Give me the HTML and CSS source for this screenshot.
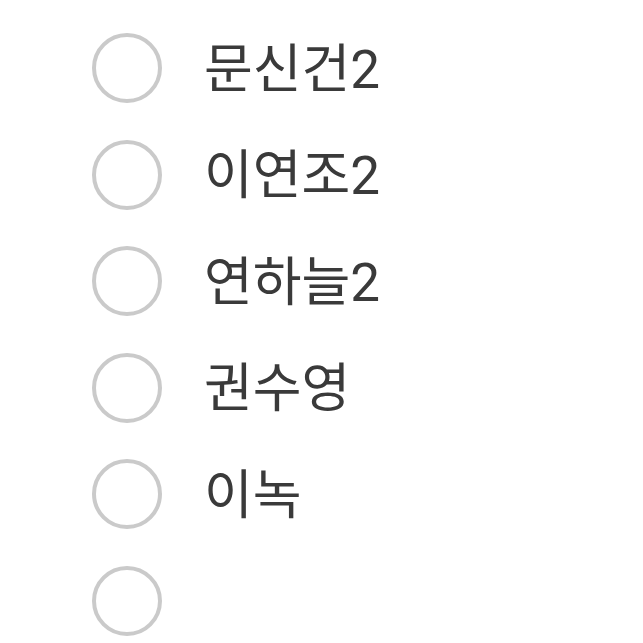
FILE: index.html
```html
<!DOCTYPE html>
<html>
    <head>
        <meta charset="UTF-8">
        <title>Vote</title>
        <link rel="stylesheet" href="styles.css">
    </head>
    <body>
        <ul class="options">
            <li class="option"><span class="radio"></span><span class="label">문신건2</span></li>
            <li class="option"><span class="radio"></span><span class="label">이연조2</span></li>
            <li class="option"><span class="radio"></span><span class="label">연하늘2</span></li>
            <li class="option"><span class="radio"></span><span class="label">권수영</span></li>
            <li class="option"><span class="radio"></span><span class="label">이녹</span></li>
            <li class="option"><span class="radio"></span><span class="label"></span></li>
        </ul>
    </body>
</html>
```

FILE: styles.css
```css
html {
    width: 100%;
    height: 100%;
}

body {
    margin: 0;
    background: #ffffff;
    font-family: Roboto, "Noto Sans CJK KR", sans-serif;
    color: #3a3a3a;
    overflow: hidden;
}

.options {
    list-style-type: none;
    margin: 0;
    padding: 15px 0 0 92px;
}

.option {
    height: 106.5px;
    display: flex;
    align-items: center;
    gap: 42px;
}

.radio {
    width: 70px;
    height: 70px;
    box-sizing: border-box;
    border: 4px solid #cacaca;
    border-radius: 50%;
    flex-shrink: 0;
}

.label {
    font-size: 53px;
    font-weight: 400;
    line-height: 1;
    padding-top: 4px;
}
```
